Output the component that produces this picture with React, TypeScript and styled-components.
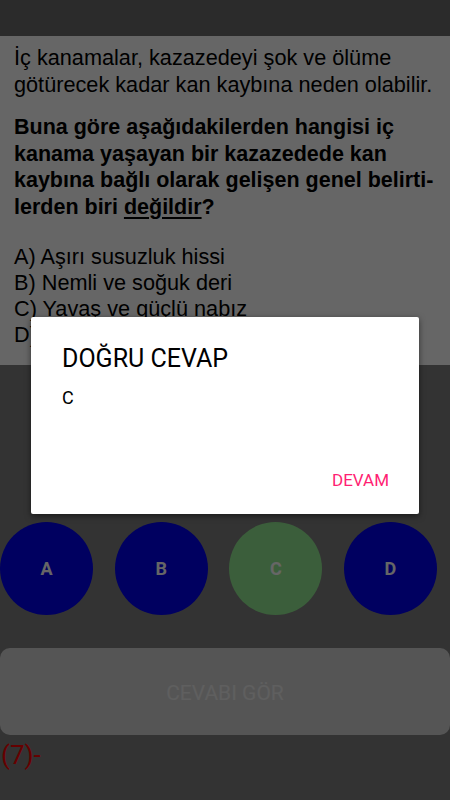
import styled, { createGlobalStyle } from 'styled-components';

const GlobalStyle = createGlobalStyle`
  html, body {
    margin: 0;
    padding: 0;
    background: #333;
  }
  #root {
    height: 800px;
  }
`;

interface PropsCorrect {
    correct: boolean;
}

const Screen = styled.div(() => ({
    position: 'relative',
    width: '450px',
    height: '800px',
    overflow: 'hidden',
    background: '#808080',
    display: 'flex',
    flexDirection: 'column',
    fontFamily: 'Roboto, "Liberation Sans", sans-serif',
}));

const TopBar = styled.div(() => ({
    height: '36px',
    background: '#6b6b6b',
    flexShrink: 0,
}));

const QuestionCard = styled.div(() => ({
    height: '329px',
    background: '#fff',
    padding: '8px 6px 0 14px',
    boxSizing: 'border-box',
    overflow: 'hidden',
    fontFamily: '"Liberation Sans", Arial, sans-serif',
    fontSize: '21.7px',
    color: '#000',
    flexShrink: 0,
}));

const Intro = styled.p(() => ({
    margin: '0 0 16px 0',
    lineHeight: '27px',
}));

const Ask = styled.p(() => ({
    margin: '0 0 24px 0',
    paddingRight: '8px',
    fontSize: '21.5px',
    lineHeight: '26.5px',
    fontWeight: 'bold',
    '& u': {
        textDecorationThickness: '2px',
        textUnderlineOffset: '3px',
    },
}));

const Option = styled.div(() => ({
    lineHeight: '26px',
    whiteSpace: 'nowrap',
}));

const AnswerRow = styled.div(() => ({
    display: 'flex',
    justifyContent: 'space-between',
    width: '437px',
    marginTop: '157px',
}));

const Circle = styled.button<PropsCorrect>((props) => ({
    width: '93px',
    height: '93px',
    borderRadius: '50%',
    border: 'none',
    padding: 0,
    background: props.correct ? '#93ec93' : '#0000ef',
    color: '#fff',
    fontFamily: 'Roboto, sans-serif',
    fontWeight: 'bold',
    fontSize: '18px',
}));

const ShowButton = styled.button(() => ({
    marginTop: '33px',
    height: '87px',
    width: '450px',
    border: 'none',
    borderRadius: '10px',
    background: '#d5d5d5',
    color: '#ededed',
    fontFamily: 'Roboto, sans-serif',
    fontSize: '21px',
    paddingTop: '3px',
}));

const Counter = styled.div(() => ({
    marginTop: '6px',
    color: '#ff0000',
    fontFamily: 'Roboto, sans-serif',
    fontSize: '26px',
    lineHeight: '28px',
    paddingLeft: '1px',
}));

const Scrim = styled.div(() => ({
    position: 'absolute',
    inset: 0,
    background: 'rgba(0,0,0,0.6)',
    display: 'flex',
    justifyContent: 'center',
    alignItems: 'flex-start',
    paddingTop: '317px',
    boxSizing: 'border-box',
}));

const Dialog = styled.div(() => ({
    width: '388px',
    height: '197px',
    background: '#fff',
    borderRadius: '2px',
    boxShadow: '0 2px 6px rgba(0,0,0,0.5)',
    boxSizing: 'border-box',
    padding: '26px 31px 0 31px',
    display: 'flex',
    flexDirection: 'column',
}));

const DialogTitle = styled.div(() => ({
    fontSize: '25px',
    lineHeight: '32px',
    color: '#000',
}));

const DialogBody = styled.div(() => ({
    marginTop: '11px',
    fontSize: '18px',
    lineHeight: '24px',
    color: '#000',
}));

const DialogActions = styled.div(() => ({
    marginTop: 'auto',
    marginBottom: '24px',
    display: 'flex',
    justifyContent: 'flex-end',
}));

const TextButton = styled.button(() => ({
    background: 'none',
    border: 'none',
    padding: 0,
    color: '#ff1f73',
    fontFamily: 'Roboto, sans-serif',
    fontSize: '17px',
    marginRight: '-1px',
}));

function App() {
    const answers = ['A', 'B', 'C', 'D'];
    return (
        <>
            <GlobalStyle />
            <Screen>
                <TopBar />
                <QuestionCard>
                    <Intro>İç kanamalar, kazazedeyi şok ve ölüme götürecek kadar kan kaybına neden olabilir.</Intro>
                    <Ask>Buna göre aşağıdakilerden hangisi iç kanama yaşayan bir kazazedede kan kaybına bağlı olarak gelişen genel belirti-lerden biri <u>değildir</u>?</Ask>
                    <Option>A) Aşırı susuzluk hissi</Option>
                    <Option>B) Nemli ve soğuk deri</Option>
                    <Option>C) Yavaş ve güçlü nabız</Option>
                    <Option>D) Hızlı ve zayıf nabız</Option>
                </QuestionCard>
                <AnswerRow>
                    {answers.map((a) => (
                        <Circle key={a} correct={a === 'C'}>{a}</Circle>
                    ))}
                </AnswerRow>
                <ShowButton>CEVABI GÖR</ShowButton>
                <Counter>(7)-</Counter>
                <Scrim>
                    <Dialog>
                        <DialogTitle>DOĞRU CEVAP</DialogTitle>
                        <DialogBody>C</DialogBody>
                        <DialogActions>
                            <TextButton>DEVAM</TextButton>
                        </DialogActions>
                    </Dialog>
                </Scrim>
            </Screen>
        </>
    )
}

export default App;
